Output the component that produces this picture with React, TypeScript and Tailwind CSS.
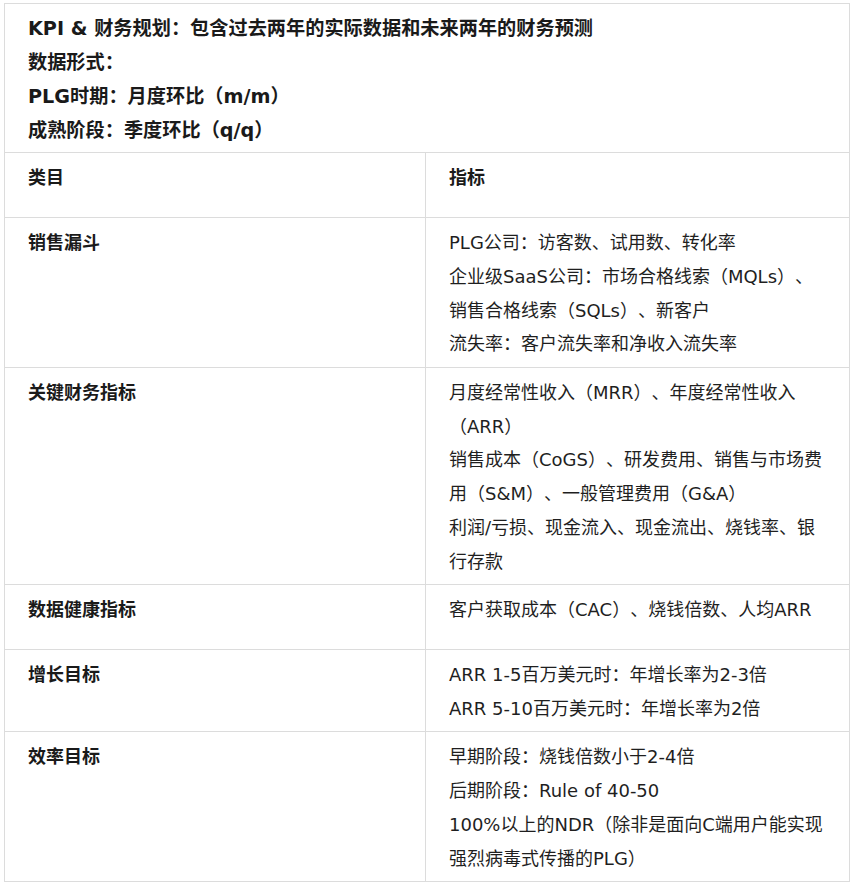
import React from "react";

const rows: { label: string; items: string[] }[] = [
  {
    label: "销售漏斗",
    items: [
      "PLG公司：访客数、试用数、转化率",
      "企业级SaaS公司：市场合格线索（MQLs）、销售合格线索（SQLs）、新客户",
      "流失率：客户流失率和净收入流失率",
    ],
  },
  {
    label: "关键财务指标",
    items: [
      "月度经常性收入（MRR）、年度经常性收入（ARR）",
      "销售成本（CoGS）、研发费用、销售与市场费用（S&M）、一般管理费用（G&A）",
      "利润/亏损、现金流入、现金流出、烧钱率、银行存款",
    ],
  },
  {
    label: "数据健康指标",
    items: ["客户获取成本（CAC）、烧钱倍数、人均ARR"],
  },
  {
    label: "增长目标",
    items: ["ARR 1-5百万美元时：年增长率为2-3倍", "ARR 5-10百万美元时：年增长率为2倍"],
  },
  {
    label: "效率目标",
    items: [
      "早期阶段：烧钱倍数小于2-4倍",
      "后期阶段：Rule of 40-50",
      "100%以上的NDR（除非是面向C端用户能实现强烈病毒式传播的PLG）",
    ],
  },
];

export default function App() {
  return (
    <div
      className="bg-white pl-[4px] pt-[3px] text-[18px] leading-[34px] text-[#1f1f1f] [text-spacing-trim:space-all]"
      style={{ fontFamily: '"DejaVu Sans", "Noto Sans CJK SC", sans-serif' }}
    >
      <div className="w-[846px] border border-[#dcdcdc]">
        <div className="px-[23px] pt-[8px] pb-[4px] text-[19.2px] font-bold text-[#1a1a1a]">
          <p>KPI &amp; 财务规划：包含过去两年的实际数据和未来两年的财务预测</p>
          <p>数据形式：</p>
          <p>PLG时期：月度环比（m/m）</p>
          <p>成熟阶段：季度环比（q/q）</p>
        </div>
        <div className="grid grid-cols-[421px_1fr] border-t border-[#dcdcdc]">
          <div className="min-h-[64px] border-r border-[#dcdcdc] px-[23px] pt-[8px] pb-[5px] font-bold text-[#1a1a1a]">
            类目
          </div>
          <div className="min-h-[64px] px-[23px] pt-[8px] pb-[5px] font-bold text-[#1a1a1a]">
            指标
          </div>
        </div>
        {rows.map((r) => (
          <div
            key={r.label}
            className="grid grid-cols-[421px_1fr] border-t border-[#dcdcdc] leading-[33.8px]"
          >
            <div className="min-h-[64px] border-r border-[#dcdcdc] px-[23px] pt-[8px] pb-[5.6px] font-bold text-[#1a1a1a]">
              {r.label}
            </div>
            <div className="min-h-[64px] px-[23px] pt-[8px] pb-[5.6px]">
              {r.items.map((t) => (
                <p key={t}>{t}</p>
              ))}
            </div>
          </div>
        ))}
      </div>
    </div>
  );
}
